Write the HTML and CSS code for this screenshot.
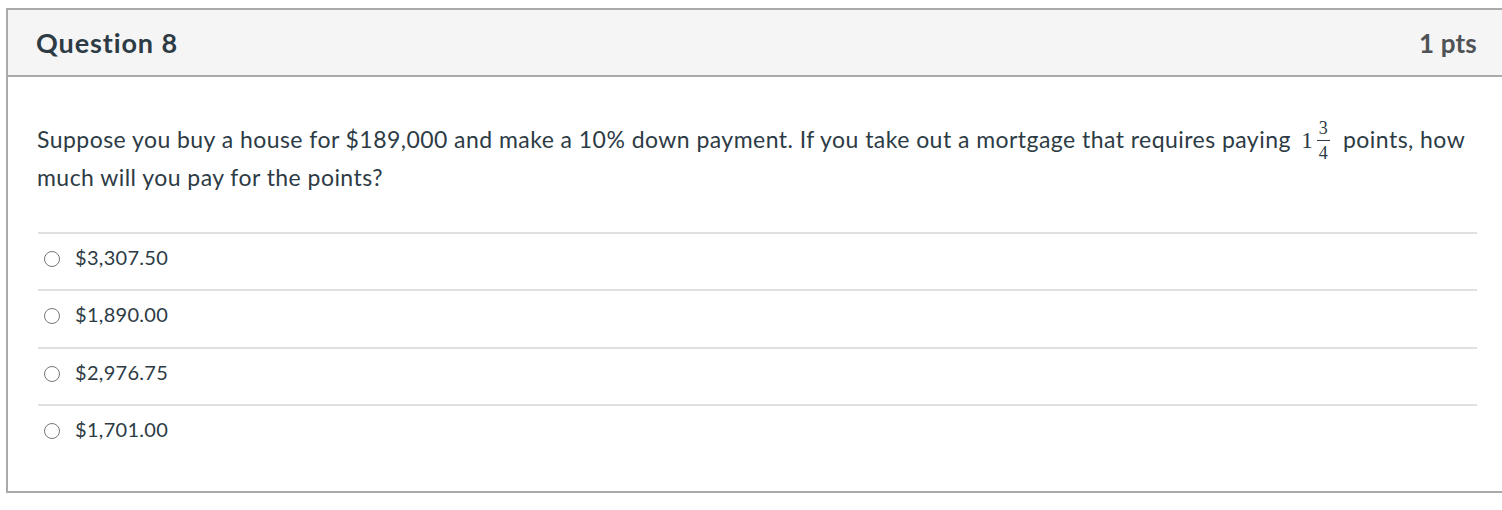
FILE: index.html
```html
<!DOCTYPE html>
<html lang="en">
<head>
<meta charset="utf-8">
<title>Question 8</title>
<link rel="stylesheet" href="styles.css">
</head>
<body>
<div class="question">
  <div class="q-header">
    <h2 class="q-title">Question 8</h2>
    <div class="q-points">1 pts</div>
  </div>
  <div class="q-content">
    <p class="q-text">Suppose you buy a house for $189,000 and make a 10% down payment. If you take out a mortgage that requires paying <span class="math"><span class="whole">1</span><span class="frac"><span class="num">3</span><span class="den">4</span></span></span> points, how much will you pay for the points?</p>
    <div class="answers">
      <label class="answer"><span class="radio"></span><span class="answer-text">$3,307.50</span></label>
      <label class="answer"><span class="radio"></span><span class="answer-text">$1,890.00</span></label>
      <label class="answer"><span class="radio"></span><span class="answer-text">$2,976.75</span></label>
      <label class="answer"><span class="radio"></span><span class="answer-text">$1,701.00</span></label>
    </div>
  </div>
</div>
</body>
</html>
```
FILE: styles.css
```css
html, body {
  margin: 0;
  padding: 0;
  background: #ffffff;
  overflow: hidden;
}

body {
  font-family: Lato, "Liberation Sans", sans-serif;
  color: #2d3b45;
}

.question {
  margin: 8px 0 0 6px;
  width: 1494px;
  border: 2px solid #aaaaaa;
}

.q-header {
  height: 65px;
  background: #f5f5f5;
  border-bottom: 2px solid #aaaaaa;
  display: flex;
  align-items: center;
  justify-content: space-between;
  padding: 0 25px 0 28px;
}

.q-title {
  margin: 0;
  font-size: 27px;
  font-weight: 700;
  letter-spacing: 0.9px;
  color: #2d3b45;
}

.q-points {
  font-size: 26px;
  font-weight: 700;
  letter-spacing: 0.2px;
  color: #4f5357;
}

.q-content {
  padding: 43px 25px 30px 29px;
}

.q-text {
  margin: 0;
  font-size: 23px;
  line-height: 30px;
  letter-spacing: 0.45px;
}

.math {
  font-family: "Liberation Serif", serif;
  white-space: nowrap;
  letter-spacing: 0;
  margin-left: 4px;
  margin-right: 7px;
}

.whole {
  font-size: 23px;
}

.frac {
  display: inline-flex;
  flex-direction: column;
  align-items: center;
  vertical-align: 14px;
  margin-left: 4px;
  font-size: 18px;
  line-height: 17px;
}

.num {
  padding: 0 2px 3px;
  border-bottom: 1px solid #2d3b45;
}

.den {
  padding-top: 4px;
}

.answers {
  margin: 40px 0 0 1px;
}

.answer {
  box-sizing: border-box;
  height: 57.33px;
  border-top: 2px solid #e0e0e0;
  display: flex;
  align-items: center;
  padding-bottom: 9px;
}

.radio {
  box-sizing: border-box;
  width: 16px;
  height: 16px;
  margin: 4px 15px 0 6px;
  border: 1px solid #777777;
  border-radius: 50%;
  background: #ffffff;
  flex: none;
}

.answer-text {
  font-size: 20px;
  letter-spacing: 0.3px;
  color: #2d3b45;
}
```
